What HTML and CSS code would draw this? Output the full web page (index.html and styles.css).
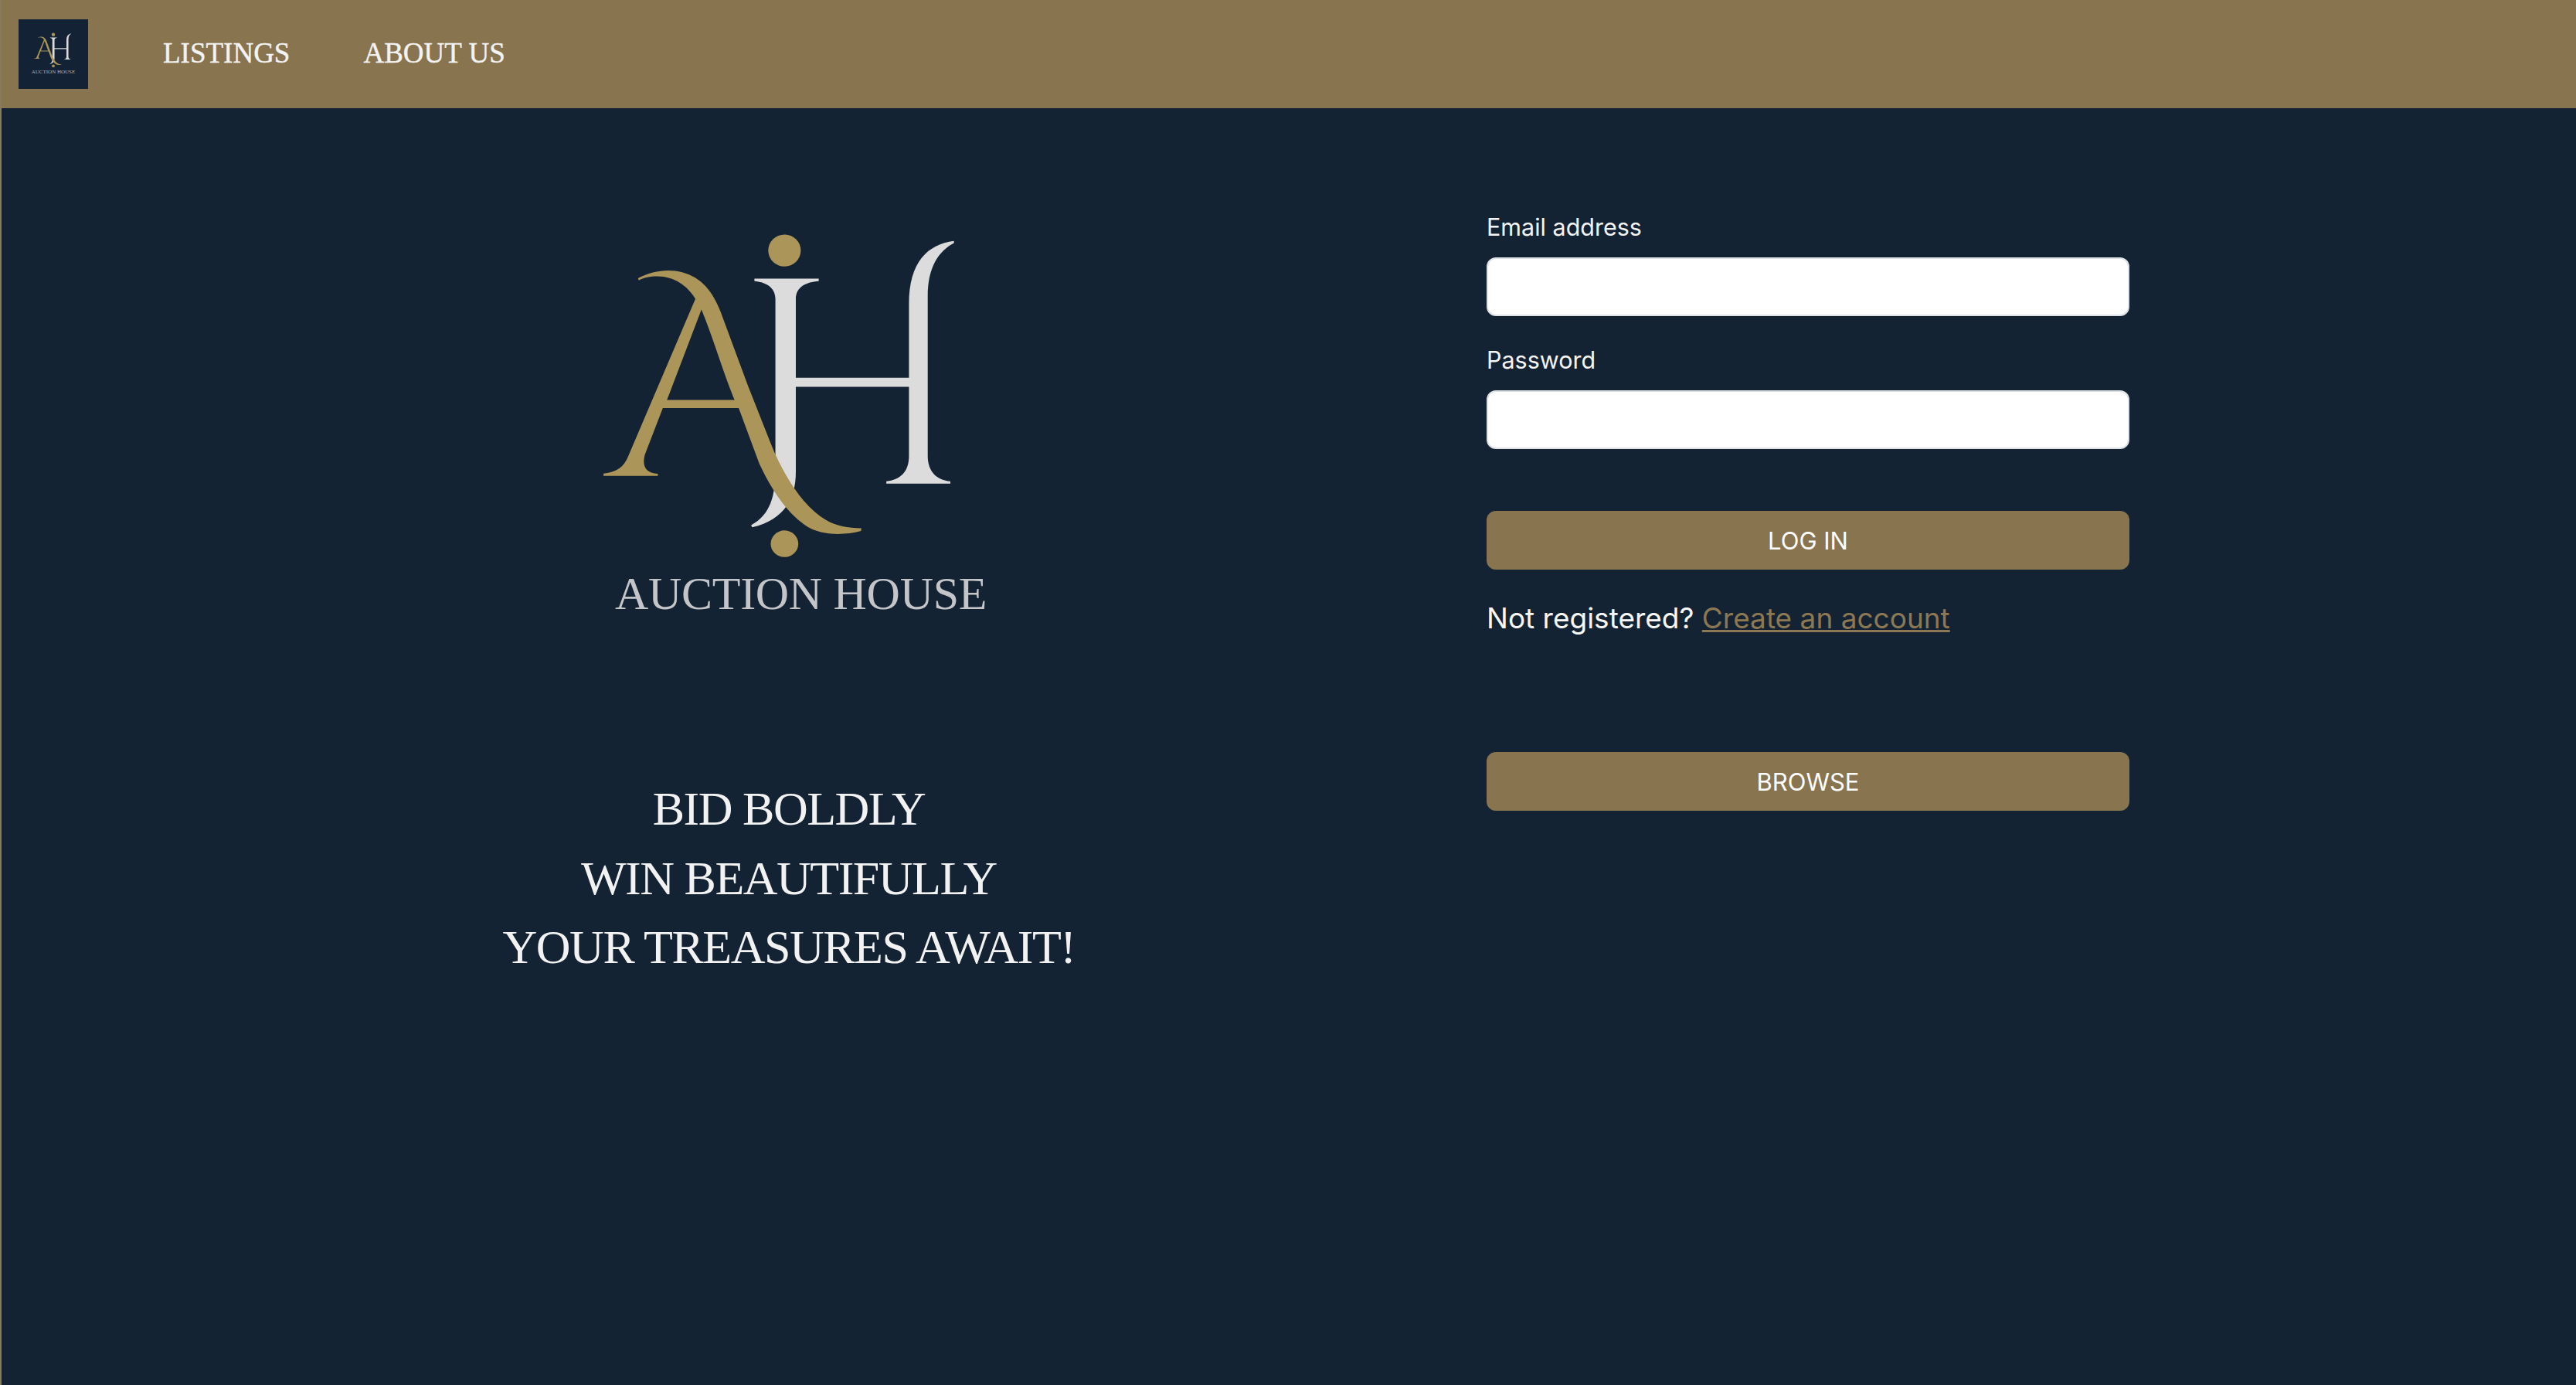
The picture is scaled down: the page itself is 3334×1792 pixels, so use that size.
FILE: index.html
```html
<!DOCTYPE html>
<html lang="en">
<head>
<meta charset="utf-8">
<title>AH Auction House</title>
<link rel="stylesheet" href="styles.css">
</head>
<body>
<svg class="defs" aria-hidden="true">
  <symbol id="ah-mark" viewBox="0 0 1568 1330" preserveAspectRatio="none">
    <path class="silver" d="M662 234 L895 234 L895 243 C850 246 812 265 812 310 L812 606 L1222 606 L1222 330 C1222 170 1290 105 1385 92 L1385 100 C1330 130 1290 190 1290 300 L1290 900 C1290 960 1325 992 1372 995 L1372 1004 L1140 1004 L1140 995 C1190 990 1222 960 1222 900 L1222 640 L812 640 L812 960 C812 1060 770 1140 654 1168 L650 1160 C720 1120 738 1050 738 950 L738 310 C738 265 700 246 662 243 Z"/>
    <path class="gold" fill-rule="evenodd" d="M240 232 C290 205 350 195 400 210 C470 230 510 280 540 360 L640 640 L720 850 C770 980 840 1090 920 1140 C960 1165 1000 1170 1050 1172 L1048 1182 C990 1198 920 1198 870 1175 C790 1130 730 1040 680 930 L605 720 L330 720 L265 895 C255 935 265 965 312 967 L312 975 L115 975 L115 966 C165 960 190 940 205 900 L448 310 C420 260 370 225 310 225 C285 225 260 230 243 240 Z M470 350 L345 690 L590 690 C550 590 510 450 470 350 Z"/>
    <ellipse class="gold" cx="771" cy="128" rx="59" ry="60"/>
    <ellipse class="gold" cx="771" cy="1230" rx="50" ry="50"/>
  </symbol>
</svg>
<header class="navbar">
  <a class="brand" href="#">
    <svg class="brand-mark"><use href="#ah-mark"/></svg>
    <span class="brand-text">AUCTION HOUSE</span>
  </a>
  <nav class="nav-links">
    <a href="#">LISTINGS</a>
    <a href="#">ABOUT US</a>
  </nav>
</header>
<main class="page">
  <section class="intro">
    <div class="logo">
      <svg class="logo-mark"><use href="#ah-mark"/></svg>
      <div class="logo-text">AUCTION HOUSE</div>
    </div>
    <p class="tagline">BID BOLDLY<br>WIN BEAUTIFULLY<br>YOUR TREASURES AWAIT!</p>
  </section>
  <section class="access">
    <form class="login">
      <label class="field-label" for="email">Email address</label>
      <input class="field" id="email" type="email">
      <label class="field-label" for="password">Password</label>
      <input class="field" id="password" type="password">
      <button class="btn btn-login" type="button">LOG IN</button>
      <p class="register">Not registered? <a href="#">Create an account</a></p>
    </form>
    <button class="btn btn-browse" type="button">BROWSE</button>
  </section>
</main>
</body>
</html>
```
FILE: styles.css
```css
* { box-sizing: border-box; }
html, body { margin: 0; height: 100%; }
body {
  background: #142333;
  color: #fff;
  font-family: Inter, "Liberation Sans", sans-serif;
  display: flex;
  flex-direction: column;
  overflow: hidden;
  border-left: 2px solid #8a7a5c;
}
.defs { width: 0; height: 0; display: block; position: absolute; }
.silver { fill: #dcdcdd; }
.gold { fill: #ab9558; }

.navbar {
  flex: none;
  height: 140px;
  background: #88744f;
  display: flex;
  align-items: center;
  padding-left: 22px;
}
.brand {
  width: 90px;
  height: 90px;
  background: #132235;
  display: flex;
  flex-direction: column;
  align-items: center;
  padding-top: 15px;
  text-decoration: none;
}
.brand-mark { width: 59px; height: 49px; display: block; }
.brand-text {
  font-family: "Liberation Serif", serif;
  font-size: 7px;
  line-height: 9px;
  color: #aeb2b8;
  white-space: nowrap;
}
.nav-links {
  display: flex;
  gap: 95px;
  margin-left: 97px;
  padding-bottom: 4px;
}
.nav-links a {
  font-family: "Liberation Serif", serif;
  font-size: 37px;
  color: #f3f3f3;
  text-decoration: none;
  -webkit-text-stroke: 0.4px #f3f3f3;
}

.page {
  flex: 1;
  display: grid;
  grid-template-columns: 1922px 832px;
}
.intro { padding-top: 140px; }
.logo { margin-left: 738px; }
.logo-mark { width: 560px; height: 458px; display: block; }
.logo-text {
  margin: -4px 0 0 56px;
  font-family: "Liberation Serif", serif;
  font-size: 60px;
  line-height: 68px;
  letter-spacing: -0.3px;
  color: #c3c5c9;
  white-space: nowrap;
}
.tagline {
  width: 2038px;
  margin: 200px 0 0;
  font-family: "Liberation Serif", serif;
  font-size: 62px;
  line-height: 89.5px;
  letter-spacing: -1.5px;
  text-align: center;
  color: #f2f2f2;
}

.access { padding-top: 129px; }
.login { display: flex; flex-direction: column; }
.field-label {
  font-size: 30.5px;
  line-height: 48px;
  margin-bottom: 16px;
  color: #f4f4f5;
  padding-top: 1px;
  height: 48px;
}
.field {
  height: 76px;
  border: 2px solid #dee2e6;
  border-radius: 12px;
  background: #fff;
  margin-bottom: 32px;
}
.btn {
  display: block;
  width: 100%;
  height: 76px;
  border: 0;
  border-radius: 12px;
  background: #88744f;
  color: #fff;
  font-family: inherit;
  font-size: 31px;
}
.btn-login { margin-top: 48px; }
.register {
  margin: 33px 0 0;
  font-size: 37px;
  line-height: 60px;
  color: #f7f7f7;
}
.register a { color: #8c7852; }
.btn-browse { margin-top: 143px; }
```
